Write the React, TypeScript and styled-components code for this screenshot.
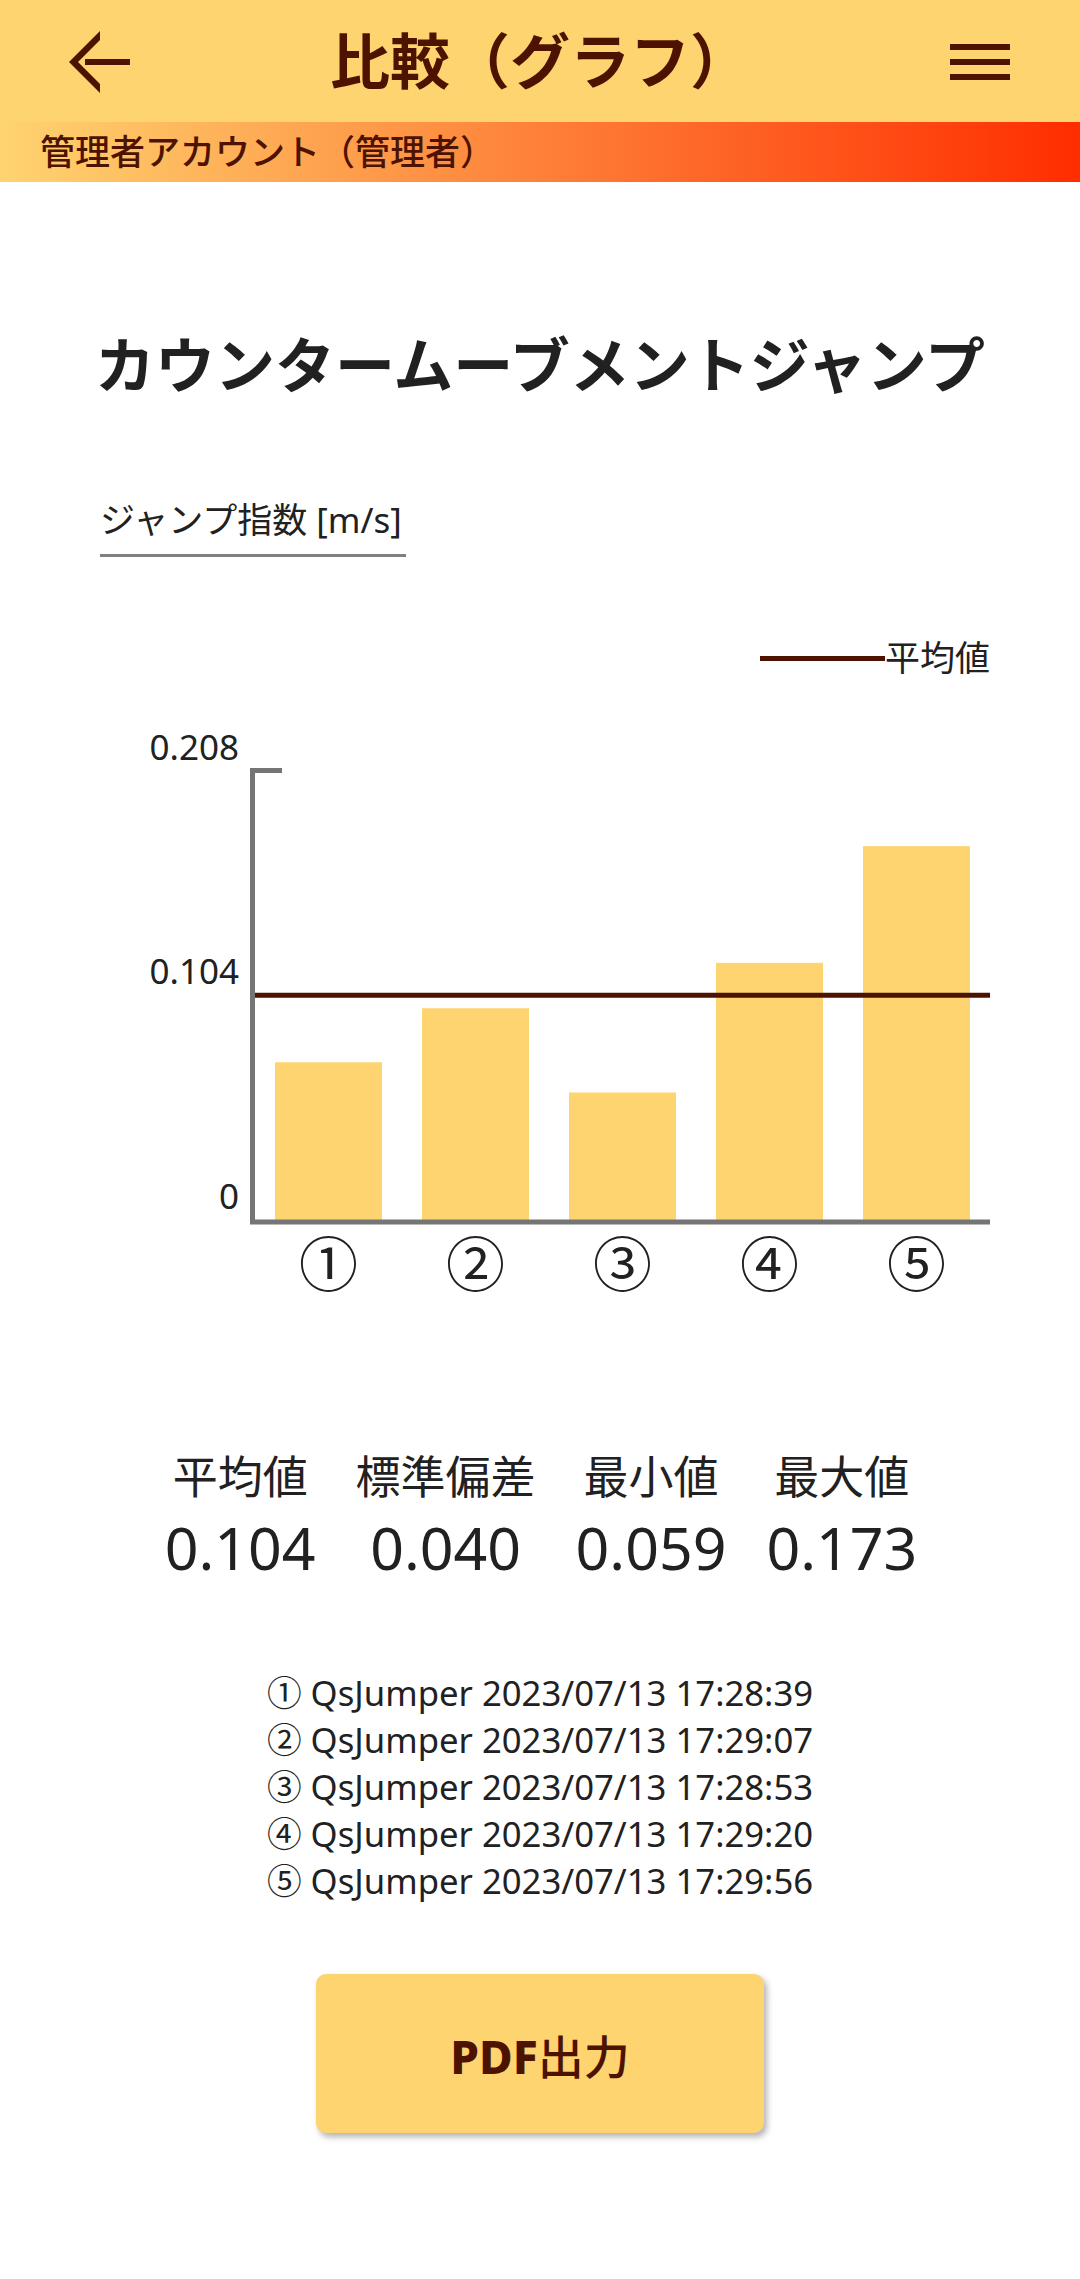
import React from "react";
import styled, { createGlobalStyle } from "styled-components";

const GlobalStyle = createGlobalStyle`
  html, body {
    margin: 0;
    padding: 0;
    background: #ffffff;
  }
  body {
    font-family: "Noto Sans", "Noto Sans CJK JP", sans-serif;
    color: #212121;
  }
`;

const BROWN = "#4d1300";
const YELLOW = "#fed470";

const Page = styled.div`
  width: 1080px;
  min-height: 2279px;
  background: #ffffff;
`;

const Header = styled.header`
  height: 122px;
  background: ${YELLOW};
  display: grid;
  grid-template-columns: 1fr auto 1fr;
  align-items: center;
`;

const IconSlot = styled.div<{ side: "left" | "right" }>`
  display: flex;
  justify-content: ${({ side }) => (side === "left" ? "flex-start" : "flex-end")};
  padding: ${({ side }) => (side === "left" ? "0 0 0 64px" : "0 64px 0 0")};
  svg {
    display: block;
  }
`;

const HeaderTitle = styled.h1`
  margin: 0;
  font-size: 60px;
  font-weight: 700;
  line-height: 80px;
  color: ${BROWN};
  white-space: nowrap;
`;

const AccountBar = styled.div`
  height: 60px;
  line-height: 60px;
  padding-left: 40px;
  font-size: 35px;
  font-weight: 500;
  color: ${BROWN};
  background: linear-gradient(to right, #fed470, #ff2d00);
`;

const PageTitle = styled.h2`
  margin: 142px 0 0;
  text-align: center;
  font-size: 60px;
  font-weight: 700;
  line-height: 82px;
  color: #212121;
`;

const SelectorRow = styled.div`
  margin-top: 90px;
  padding-left: 100px;
`;

const Selector = styled.div`
  display: inline-block;
  font-size: 35px;
  line-height: 48px;
  padding: 0 4px 10px 0;
  border-bottom: 3px solid #808080;
  color: #212121;
`;

const Legend = styled.div`
  margin-top: 77px;
  display: flex;
  justify-content: flex-end;
  align-items: center;
  padding-right: 90px;
  height: 48px;
`;

const LegendLine = styled.span`
  width: 125px;
  height: 5px;
  background: ${BROWN};
`;

const LegendLabel = styled.span`
  font-size: 35px;
  line-height: 48px;
  color: #212121;
`;

const ChartSvg = styled.svg`
  display: block;
  width: 1080px;
  height: 640px;
  overflow: visible;
  text {
    font-family: "Noto Sans", "Noto Sans CJK JP", sans-serif;
    fill: #212121;
  }
`;

const StatsRow = styled.div`
  margin-top: 125px;
  display: flex;
  justify-content: center;
  gap: 40px;
  padding-left: 2px;
`;

const StatCol = styled.div`
  display: flex;
  flex-direction: column;
  align-items: center;
`;

const StatLabel = styled.div`
  font-size: 45px;
  line-height: 60px;
  white-space: nowrap;
`;

const StatValue = styled.div`
  font-size: 59px;
  line-height: 80px;
`;

const MeasureList = styled.ul`
  list-style: none;
  margin: 82px 0 0;
  padding: 0;
  text-align: center;
`;

const MeasureItem = styled.li`
  font-size: 34.7px;
  line-height: 47px;
  white-space: nowrap;
`;

const ButtonRow = styled.div`
  margin-top: 70px;
  display: flex;
  justify-content: center;
`;

const PdfButton = styled.button`
  width: 448px;
  height: 159px;
  border: none;
  border-radius: 10px;
  background: ${YELLOW};
  box-shadow: 3px 4px 6px rgba(0, 0, 0, 0.3);
  font-family: "Noto Sans", "Noto Sans CJK JP", sans-serif;
  font-size: 46px;
  font-weight: 800;
  color: ${BROWN};
  cursor: pointer;

  span {
    font-weight: 500;
  }
`;

const BackIcon = () => (
  <svg width="72" height="72" viewBox="0 0 72 72">
    <polygon points="36,6 36,15 14,37 36,59 36,68 5,37" fill={BROWN} />
    <rect x="21" y="34" width="45" height="6" fill={BROWN} />
  </svg>
);

const MenuIcon = () => (
  <svg width="72" height="72" viewBox="0 0 72 72">
    <rect x="6" y="19" width="60" height="6" fill={BROWN} />
    <rect x="6" y="34" width="60" height="6" fill={BROWN} />
    <rect x="6" y="49" width="60" height="6" fill={BROWN} />
  </svg>
);

const values = [0.073, 0.098, 0.059, 0.119, 0.173];
const average = 0.104;
const maxAxis = 0.208;
const circled = ["①", "②", "③", "④", "⑤"];

// chart geometry (svg units == page px, origin at the svg top)
const AX_X = 252.5;
const AX_RIGHT = 990;
const TOP_Y = 88.5;
const BASE_Y = 538;
const SLOT = (AX_RIGHT - 255) / values.length;
const BAR_W = 107;

const yFor = (v: number) => BASE_Y - (v / maxAxis) * (BASE_Y - TOP_Y);

const BarChart = () => (
  <ChartSvg viewBox="0 0 1080 640">
    {values.map((v, i) => {
      const cx = 255 + SLOT * (i + 0.5);
      return (
        <rect
          key={i}
          x={cx - BAR_W / 2}
          y={yFor(v)}
          width={BAR_W}
          height={BASE_Y - yFor(v)}
          fill={YELLOW}
        />
      );
    })}
    <line
      x1={255}
      x2={AX_RIGHT}
      y1={yFor(average)}
      y2={yFor(average)}
      stroke={BROWN}
      strokeWidth={5}
    />
    <path
      d={`M282 ${TOP_Y} H${AX_X} V${BASE_Y + 2} H${AX_RIGHT}`}
      fill="none"
      stroke="#757575"
      strokeWidth={5}
    />
    {[maxAxis, average, 0].map((v) => (
      <text key={v} x={239} y={yFor(v) - 11} fontSize={35} textAnchor="end">
        {v === 0 ? "0" : v.toFixed(3)}
      </text>
    ))}
    {circled.map((c, i) => (
      <text
        key={c}
        x={255 + SLOT * (i + 0.5)}
        y={581}
        fontSize={59}
        textAnchor="middle"
        dominantBaseline="central"
      >
        {c}
      </text>
    ))}
  </ChartSvg>
);

const stats = [
  { label: "平均値", value: "0.104" },
  { label: "標準偏差", value: "0.040" },
  { label: "最小値", value: "0.059" },
  { label: "最大値", value: "0.173" },
];

const measurements = [
  "2023/07/13 17:28:39",
  "2023/07/13 17:29:07",
  "2023/07/13 17:28:53",
  "2023/07/13 17:29:20",
  "2023/07/13 17:29:56",
];

const App: React.FC = () => {
  return (
    <Page>
      <GlobalStyle />
      <Header>
        <IconSlot side="left">
          <BackIcon />
        </IconSlot>
        <HeaderTitle>比較（グラフ）</HeaderTitle>
        <IconSlot side="right">
          <MenuIcon />
        </IconSlot>
      </Header>
      <AccountBar>管理者アカウント（管理者）</AccountBar>

      <PageTitle>カウンタームーブメントジャンプ</PageTitle>

      <SelectorRow>
        <Selector>ジャンプ指数 [m/s]</Selector>
      </SelectorRow>

      <Legend>
        <LegendLine />
        <LegendLabel>平均値</LegendLabel>
      </Legend>

      <BarChart />

      <StatsRow>
        {stats.map((s) => (
          <StatCol key={s.label}>
            <StatLabel>{s.label}</StatLabel>
            <StatValue>{s.value}</StatValue>
          </StatCol>
        ))}
      </StatsRow>

      <MeasureList>
        {measurements.map((m, i) => (
          <MeasureItem key={m}>
            {circled[i]} QsJumper {m}
          </MeasureItem>
        ))}
      </MeasureList>

      <ButtonRow>
        <PdfButton>
          PDF<span>出力</span>
        </PdfButton>
      </ButtonRow>
    </Page>
  );
};

export default App;
